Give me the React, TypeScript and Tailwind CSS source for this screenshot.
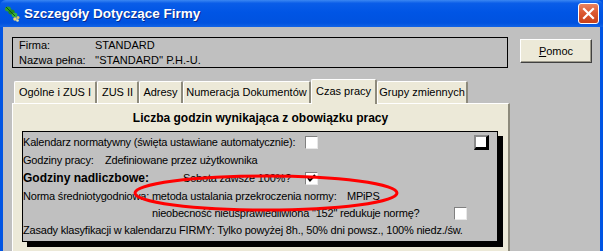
import React from "react";

const Checkbox = ({ checked = false }: { checked?: boolean }) => (
  <div className="w-[13px] h-[13px] shrink-0 border-t border-l border-[#808080] border-r border-b border-r-[#e8e8e8] border-b-[#e8e8e8] bg-white flex items-center justify-center">
    {checked && (
      <svg width="9" height="9" viewBox="0 0 9 9">
        <path d="M1 4 L3 6.5 L8 1" stroke="#000" strokeWidth="2" fill="none" />
      </svg>
    )}
  </div>
);

const Tab = ({ label, w, active = false }: { label: string; w: string; active?: boolean }) => (
  <div
    className={
      active
        ? `${w} h-[25px] -mb-px relative z-10 flex items-center justify-center bg-[#ece9d8] border-t border-l border-white border-r-2 border-r-[#8d8a7c] rounded-t-[2px] pb-[2px]`
        : `${w} h-[22px] flex items-center justify-center bg-[#ece9d8] border-t border-l border-white border-r-2 border-r-[#8d8a7c] rounded-t-[2px]`
    }
  >
    <span className="whitespace-nowrap">{label}</span>
  </div>
);

const TitleBar = () => (
  <div className="h-[27px] flex items-center bg-[linear-gradient(to_bottom,#3b87f2_0%,#0a5de8_12%,#0055e5_45%,#0052df_85%,#1263e6_100%)] rounded-t-[6px] px-[4px]">
    <svg width="16" height="17" viewBox="0 0 16 17" className="shrink-0">
      <ellipse cx="4" cy="4" rx="3" ry="2.5" fill="#2f9e2f" />
      <ellipse cx="7.5" cy="7" rx="3.2" ry="2.5" fill="#1f8a1f" />
      <ellipse cx="10.5" cy="10" rx="2.8" ry="2.3" fill="#38b038" />
      <path d="M2 2 L11 11" stroke="#0d5a0d" strokeWidth="1" />
      <circle cx="11" cy="14" r="1.8" fill="#e8d878" />
      <circle cx="14" cy="12.5" r="1.5" fill="#d8c860" />
      <circle cx="13.5" cy="15.5" r="1.3" fill="#f0e8a0" />
    </svg>
    <span className="ml-[4px] text-white font-bold text-[13.5px] whitespace-nowrap [text-shadow:1px_1px_0_#0a2a8a]">
      Szczegóły Dotyczące Firmy
    </span>
    <div className="ml-auto w-[21px] h-[21px] rounded-[3px] border border-white bg-[linear-gradient(to_bottom,#e98460_0%,#dc5a32_45%,#c8401a_100%)] flex items-center justify-center">
      <svg width="13" height="13" viewBox="0 0 13 13">
        <path d="M2 2 L11 11 M11 2 L2 11" stroke="#fff" strokeWidth="2.2" strokeLinecap="square" />
      </svg>
    </div>
  </div>
);

const App = () => {
  return (
    <div className="relative w-[603px] h-[251px] overflow-hidden bg-[#0054e3] font-['Liberation_Sans',Arial,sans-serif] text-[11px] text-black leading-[13px]">
      <TitleBar />

      <div className="h-[224px] mx-[3px] bg-[#c0c0c0] pl-[9px] pt-[10px]">
        {/* firma info + help */}
        <div className="flex items-start">
          <div className="w-[496px] h-[31px] border border-black px-[6px] flex flex-col">
            <div className="h-[14px] flex items-center">
              <span className="w-[76px]">Firma:</span>
              <span>STANDARD</span>
            </div>
            <div className="h-[14px] mt-[1px] flex items-center">
              <span className="w-[76px]">Nazwa pełna:</span>
              <span>''STANDARD'' P.H.-U.</span>
            </div>
          </div>
          <button className="ml-[12px] mt-[2px] w-[72px] h-[24px] bg-[#ece9d8] border border-t-white border-l-white border-r-[#404040] border-b-[#404040] shadow-[inset_-1px_-1px_0_#9d9a8c] flex items-center justify-center">
            <span>
              <span className="underline">P</span>omoc
            </span>
          </button>
        </div>

        {/* tabs */}
        <div className="mt-[11px] w-[498px]">
          <div className="h-[24px] pl-[2px] flex items-end">
            <Tab label="Ogólne i ZUS I" w="w-[83px]" />
            <Tab label="ZUS II" w="w-[42px]" />
            <Tab label="Adresy" w="w-[44px]" />
            <Tab label="Numeracja Dokumentów" w="w-[128px]" />
            <Tab label="Czas pracy" w="w-[66px]" active />
            <Tab label="Grupy zmiennych" w="w-[91px]" />
          </div>

          <div className="h-[160px] bg-[#ece9d8] border-t border-l border-white border-r-2 border-r-[#8d8a7c]">
            <div className="pt-[7px] h-[21px] text-center font-bold text-[12px] leading-[14px] whitespace-nowrap">
              Liczba godzin wynikająca z obowiązku pracy
            </div>

            <div className="ml-[9px] mt-[6px] w-[476px] border border-black bg-[#c0c0c0] shadow-[5px_5px_0_#000] pt-px pb-[2px] whitespace-nowrap tracking-[-0.2px]">
              <div className="h-[18px] flex items-center">
                <span className="w-[282px] shrink-0">Kalendarz normatywny (święta ustawiane automatycznie):</span>
                <Checkbox />
                <div className="ml-[156px] w-[15px] h-[15px] bg-white border-t-2 border-l-2 border-[#8a8a8a] border-r-[3px] border-b-[3px] border-r-black border-b-black" />
              </div>
              <div className="h-[18px] flex items-center">
                <span className="w-[82px] shrink-0">Godziny pracy:</span>
                <span>Zdefiniowane przez użytkownika</span>
              </div>
              <div className="h-[18px] flex items-center">
                <span className="w-[160px] shrink-0 font-bold text-[12px] tracking-normal">Godziny nadliczbowe:</span>
                <span className="w-[122px] shrink-0">Sobota zawsze 100%?</span>
                <Checkbox checked />
              </div>
              <div className="h-[18px] flex items-center">
                <span className="w-[324px] shrink-0">Norma średniotygodniowa: metoda ustalania przekroczenia normy:</span>
                <span>MPiPS</span>
              </div>
              <div className="h-[17px] flex items-center pl-[129px]">
                <span className="w-[302px] shrink-0">nieobecność nieusprawiedliwiona "152" redukuje normę?</span>
                <Checkbox />
              </div>
              <div className="h-[17px] flex items-center">
                <span>Zasady klasyfikacji w kalendarzu FIRMY: Tylko powyżej 8h., 50% dni powsz., 100% niedz./św.</span>
              </div>
            </div>
          </div>
        </div>
      </div>

      {/* red annotation ellipse drawn over the form */}
      <svg className="absolute left-0 top-0 pointer-events-none" width="603" height="251" viewBox="0 0 603 251">
        <ellipse cx="266" cy="193" rx="131" ry="17" fill="none" stroke="#ff0000" strokeWidth="3" />
      </svg>
    </div>
  );
};

export default App;
